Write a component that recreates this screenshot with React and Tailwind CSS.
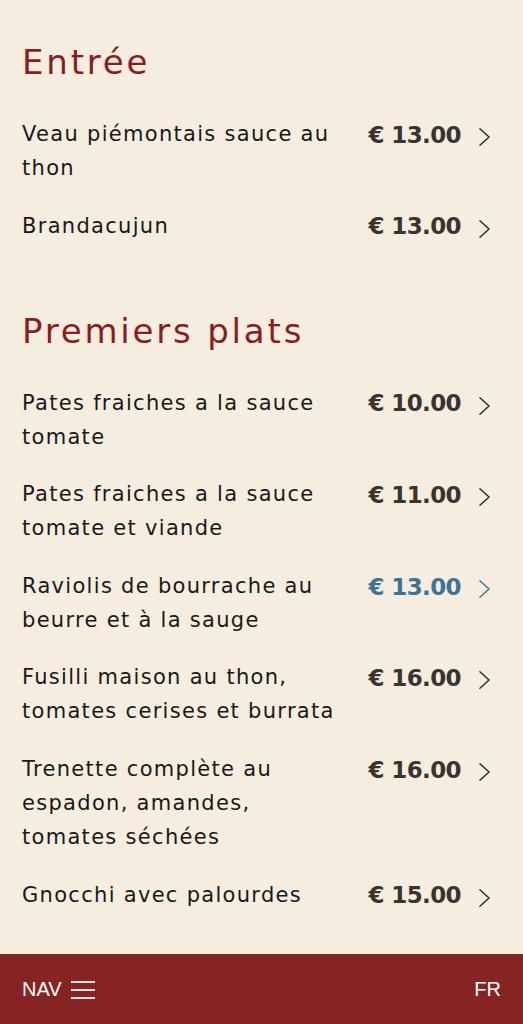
const sections = [
  {
    title: "Entrée",
    items: [
      { name: "Veau piémontais sauce au thon", price: "13.00" },
      { name: "Brandacujun", price: "13.00" },
    ],
  },
  {
    title: "Premiers plats",
    items: [
      { name: "Pates fraiches a la sauce tomate", price: "10.00" },
      { name: "Pates fraiches a la sauce tomate et viande", price: "11.00" },
      { name: "Raviolis de bourrache au beurre et à la sauge", price: "13.00", active: true },
      { name: "Fusilli maison au thon, tomates cerises et burrata", price: "16.00" },
      { name: "Trenette complète au espadon, amandes, tomates séchées", price: "16.00" },
      { name: "Gnocchi avec palourdes", price: "15.00" },
    ],
  },
];

function Chevron({ className }) {
  return (
    <svg viewBox="0 0 14 24" className={className} fill="none" stroke="currentColor" strokeWidth="1.5" strokeLinecap="round" strokeLinejoin="round">
      <path d="M2 3 L12 12 L2 21" />
    </svg>
  );
}

function MenuRow({ item }) {
  const tone = item.active ? "text-[#3e7393]" : "text-[#39342f]";
  return (
    <div className="flex items-start pr-[32px]">
      <div className="w-[330px] text-[21px] leading-[34px] tracking-[1.3px] text-[#1a1816]">{item.name}</div>
      <div className="flex-1 flex items-center justify-end h-[34px] mt-[1px]">
        <span className={`text-[23px] font-bold tracking-[-0.6px] ${tone}`}>€ {item.price}</span>
      </div>
      <div className={`h-[34px] flex items-center pl-[17px] ${item.active ? "text-[#3e7393]" : "text-[#2a2623]"}`}>
        <Chevron className="w-[13px] h-[22px] mt-[6px]" />
      </div>
    </div>
  );
}

export default function App() {
  return (
    <div className="min-h-screen flex flex-col bg-[#f6ede1]" style={{ fontFamily: "'DejaVu Sans', sans-serif" }}>
      <main className="pl-[22px] pt-[42px] pb-[40px]">
        {sections.map((s, i) => (
          <section key={s.title} className={i > 0 ? "mt-[67px]" : ""}>
            <h2 className="text-[34px] leading-[40px] tracking-[2.8px] font-normal text-[#8a1d1d]">{s.title}</h2>
            <div className="mt-[35px] flex flex-col gap-[23.6px]">
              {s.items.map((it) => (
                <MenuRow key={it.name} item={it} />
              ))}
            </div>
          </section>
        ))}
      </main>
      <footer className="mt-auto h-[70px] bg-[#862323] flex items-center justify-between px-[22px] text-white font-['Liberation_Sans',sans-serif]">
        <div className="flex items-center gap-[9px]">
          <span className="text-[20px] leading-none">NAV</span>
          <span className="flex flex-col gap-[6px] w-[24px] mt-[1px]">
            <span className="h-[2px] bg-[#fbe3df]" />
            <span className="h-[2px] bg-[#fbe3df]" />
            <span className="h-[2px] bg-[#fbe3df]" />
          </span>
        </div>
        <span className="text-[20px] leading-none">FR</span>
      </footer>
    </div>
  );
}
